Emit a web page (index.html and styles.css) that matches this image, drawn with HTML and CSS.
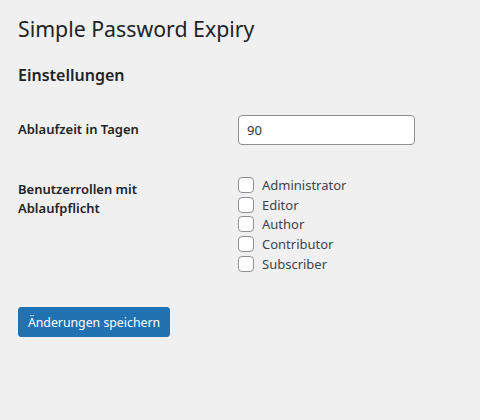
FILE: index.html
```html
<!DOCTYPE html>
<html lang="de">
<head>
<meta charset="utf-8">
<title>Simple Password Expiry</title>
<link rel="stylesheet" href="styles.css">
</head>
<body>
<div class="wrap">
  <h1 class="title">Simple Password Expiry</h1>
  <h2 class="section">Einstellungen</h2>
  <form class="form">
    <div class="row">
      <div class="th"><label for="days">Ablaufzeit in Tagen</label></div>
      <div class="td"><input id="days" class="text-input" type="text" value="90"></div>
    </div>
    <div class="row">
      <div class="th">Benutzerrollen mit Ablaufpflicht</div>
      <div class="td roles">
        <label class="role"><input type="checkbox" class="cb"><span>Administrator</span></label>
        <label class="role"><input type="checkbox" class="cb"><span>Editor</span></label>
        <label class="role"><input type="checkbox" class="cb"><span>Author</span></label>
        <label class="role"><input type="checkbox" class="cb"><span>Contributor</span></label>
        <label class="role"><input type="checkbox" class="cb"><span>Subscriber</span></label>
      </div>
    </div>
    <div class="submit">
      <button type="button" class="button-primary">Änderungen speichern</button>
    </div>
  </form>
</div>
</body>
</html>
```
FILE: styles.css
```css
html, body {
  margin: 0;
  padding: 0;
  background: #f0f0f1;
}
body {
  font-family: "Noto Sans", "Open Sans", sans-serif;
  color: #1d2327;
  font-size: 13px;
}
.wrap {
  padding: 0 18px;
}
.title {
  font-size: 21.3px;
  font-weight: 400;
  line-height: 30px;
  margin: 0;
  padding-top: 14px;
}
.section {
  font-size: 16px;
  font-weight: 600;
  line-height: 22px;
  margin: 20px 0 0;
}
.form {
  margin-top: 14px;
}
.row {
  display: grid;
  grid-template-columns: 210px 1fr;
  gap: 0 10px;
}
.th {
  padding: 20px 0;
  font-size: 13px;
  font-weight: 600;
  line-height: 19px;
  width: 150px;
}
.td {
  padding: 15px 0;
}
.text-input {
  box-sizing: border-box;
  width: 177px;
  height: 30px;
  border: 1px solid #8c8f94;
  border-radius: 4px;
  background: #fff;
  padding: 0 8px;
  font-family: inherit;
  font-size: 13px;
  color: #2c3338;
  margin: 0;
  outline: none;
}
.roles {
  display: flex;
  flex-direction: column;
}
.role {
  display: flex;
  align-items: center;
  gap: 8px;
  height: 19.7px;
  font-size: 13px;
  color: #3c434a;
}
.cb {
  appearance: none;
  -webkit-appearance: none;
  box-sizing: border-box;
  width: 16px;
  height: 16px;
  margin: 0;
  border: 1px solid #8c8f94;
  border-radius: 4px;
  background: #fff;
}
.submit {
  padding-top: 19px;
}
.button-primary {
  box-sizing: border-box;
  height: 30px;
  width: 152px;
  padding: 0;
  white-space: nowrap;
  background: #2271b1;
  border: 1px solid #2271b1;
  border-radius: 3px;
  color: #fff;
  font-family: inherit;
  font-size: 12.3px;
  cursor: pointer;
}
```
